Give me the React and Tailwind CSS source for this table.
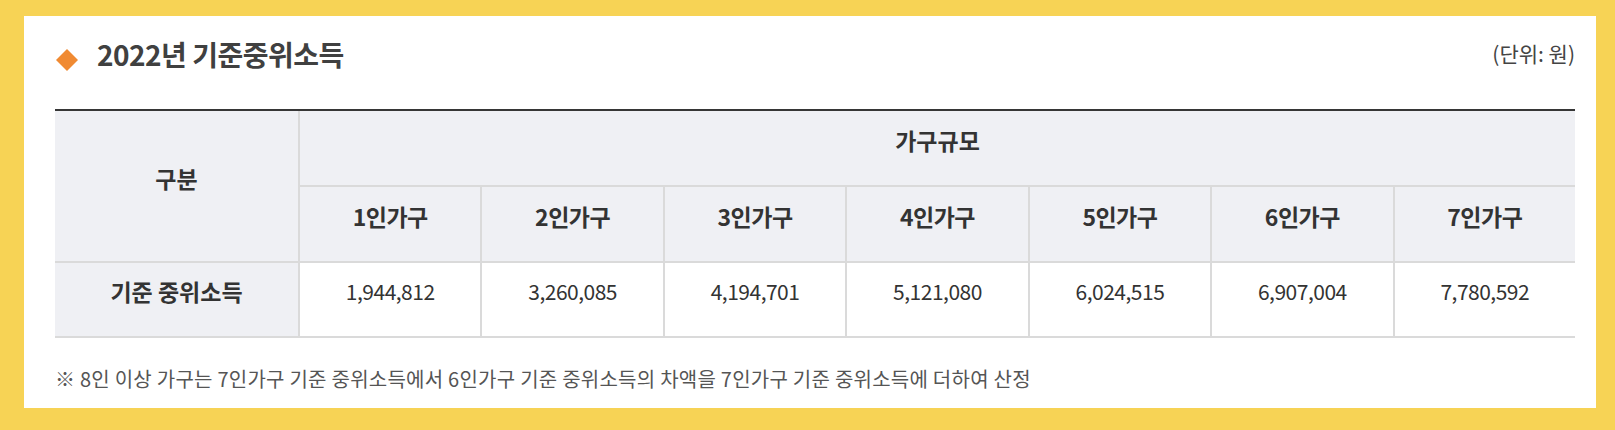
import React from "react";

const sizes = ["1인가구", "2인가구", "3인가구", "4인가구", "5인가구", "6인가구", "7인가구"];
const incomes = ["1,944,812", "3,260,085", "4,194,701", "5,121,080", "6,024,515", "6,907,004", "7,780,592"];

export default function App() {
  return (
    <div className="w-[1615px] h-[430px] bg-[#f7d355] pt-[16px] pl-[24px] pr-[19px] pb-[22px] font-['Noto_Sans_CJK_KR',sans-serif]">
      <div className="h-full bg-white pl-[31px] pr-[21px] pt-[12px]">
        {/* 제목 */}
        <div className="flex items-center justify-between h-[52px]">
          <div className="flex items-center">
            <svg width="24" height="24" viewBox="0 0 24 24" className="mt-[12px]">
              <polygon points="12,1 23,12 12,23 1,12" fill="#f08a32" />
            </svg>
            <h2 className="ml-[18px] text-[28px] font-bold text-[#404040] tracking-[-0.5px]">2022년 기준중위소득</h2>
          </div>
          <span className="text-[21px] text-[#444]">(단위: 원)</span>
        </div>

        {/* 표 */}
        <div className="mt-[29px] grid grid-cols-[243px_repeat(7,1fr)] grid-rows-[76px_76px_75px] border-t-2 border-[#363636] text-[#333]">
          <div className="row-span-2 flex items-center justify-center bg-[#eff0f4] border-b-2 border-[#dadada] text-[23px] font-bold pb-[16px]">
            구분
          </div>
          <div className="col-span-7 flex items-center justify-center bg-[#eff0f4] border-b-2 border-l-2 border-[#dadada] text-[23px] font-bold pb-[16px]">
            가구규모
          </div>
          {sizes.map((s) => (
            <div key={s} className="flex items-center justify-center bg-[#eff0f4] border-b-2 border-l-2 border-[#dadada] text-[23px] font-bold tracking-[-0.5px] pb-[16px]">
              {s}
            </div>
          ))}
          <div className="flex items-center justify-center bg-[#eff0f4] border-b-2 border-[#dadada] text-[23px] font-bold pb-[16px]">
            기준 중위소득
          </div>
          {incomes.map((v) => (
            <div key={v} className="flex items-center justify-center bg-white border-b-2 border-l-2 border-[#dadada] text-[21px] tracking-[-0.5px] pb-[16px]">
              {v}
            </div>
          ))}
        </div>

        {/* 비고 */}
        <p className="mt-[27px] text-[20px] leading-[28px] tracking-[0.25px] text-[#555]">
          ※ 8인 이상 가구는 7인가구 기준 중위소득에서 6인가구 기준 중위소득의 차액을 7인가구 기준 중위소득에 더하여 산정
        </p>
      </div>
    </div>
  );
}
